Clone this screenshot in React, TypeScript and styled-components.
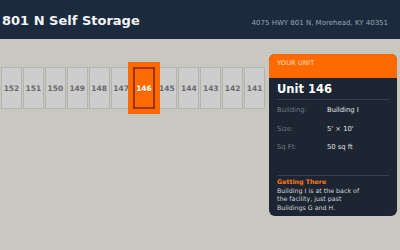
import React from "react";
import styled, { createGlobalStyle } from "styled-components";

const Global = createGlobalStyle`
  html, body { margin: 0; padding: 0; }
  body {
    width: 400px;
    height: 250px;
    overflow: hidden;
    background: #c8c8c1;
    font-family: "DejaVu Sans", Verdana, sans-serif;
  }
`;

const Page = styled.div`
  width: 400px;
  height: 250px;
  display: flex;
  flex-direction: column;
`;

const Header = styled.header`
  height: 39px;
  background: #1b2a3c;
  display: flex;
  align-items: center;
  justify-content: space-between;
  padding: 2px 12px 0 2px;
  box-sizing: border-box;
`;

const Title = styled.h1`
  margin: 0;
  font-size: 13px;
  font-weight: bold;
  color: #f2f4f7;
`;

const Address = styled.div`
  font-size: 7px;
  color: #9aa6b4;
  margin-top: 4px;
`;

const Main = styled.main`
  display: flex;
  align-items: flex-start;
  padding: 15px 3px 0 1px;
  gap: 4px;
`;

const Strip = styled.div`
  display: flex;
  gap: 1px;
  width: 264px;
  margin-top: 13px;
`;

const Unit = styled.div<{ $selected?: boolean }>`
  flex: 1;
  height: 42px;
  box-sizing: border-box;
  display: flex;
  align-items: center;
  justify-content: center;
  font-size: 7.5px;
  font-weight: bold;
  position: relative;
  background: ${(p) => (p.$selected ? "#ff6a00" : "#cdcdcd")};
  border: ${(p) => (p.$selected ? "2px solid #9b3400" : "1px solid #b2b2ae")};
  color: ${(p) => (p.$selected ? "#ffffff" : "#6a6a6a")};
  box-shadow: ${(p) => (p.$selected ? "0 0 0 5px #ff6a00" : "none")};
  z-index: ${(p) => (p.$selected ? 2 : 1)};
`;

const Panel = styled.aside`
  width: 128px;
  background: #1c2531;
  border-radius: 6px;
  overflow: hidden;
  height: 162px;
`;

const PanelHead = styled.div`
  background: #ff6a00;
  height: 24px;
  box-sizing: border-box;
  padding: 5px 8px;
  font-size: 6.5px;
  color: #ffe0c8;
  letter-spacing: 0.2px;
`;

const PanelBody = styled.div`
  padding: 4px 8px 0 8px;
`;

const UnitName = styled.div`
  font-size: 11.5px;
  font-weight: bold;
  color: #ffffff;
  padding-bottom: 3px;
  border-bottom: 1px solid #34424f;
`;

const Rows = styled.div`
  display: flex;
  flex-direction: column;
  gap: 4.5px;
  padding: 3px 0 0;
`;

const Row = styled.div`
  display: grid;
  grid-template-columns: 50px 1fr;
  height: 14px;
  align-items: center;
  font-size: 6.8px;
`;

const Label = styled.span`
  color: #6d7a88;
`;

const Value = styled.span`
  color: #e2e6ea;
`;

const Directions = styled.div`
  margin-top: 21px;
  border-top: 1px solid #34424f;
  padding-top: 2px;
  font-size: 6.3px;
  line-height: 8.7px;
  color: #d0d5db;
`;

const DirTitle = styled.div`
  color: #ff7a1a;
  font-weight: bold;
`;

const units = [152, 151, 150, 149, 148, 147, 146, 145, 144, 143, 142, 141];

export default function App() {
  return (
    <Page>
      <Global />
      <Header>
        <Title>801 N Self Storage</Title>
        <Address>4075 HWY 801 N, Morehead, KY 40351</Address>
      </Header>
      <Main>
        <Strip>
          {units.map((u) => (
            <Unit key={u} $selected={u === 146}>
              {u}
            </Unit>
          ))}
        </Strip>
        <Panel>
          <PanelHead>YOUR UNIT</PanelHead>
          <PanelBody>
            <UnitName>Unit 146</UnitName>
            <Rows>
              <Row>
                <Label>Building:</Label>
                <Value>Building I</Value>
              </Row>
              <Row>
                <Label>Size:</Label>
                <Value>5' × 10'</Value>
              </Row>
              <Row>
                <Label>Sq Ft:</Label>
                <Value>50 sq ft</Value>
              </Row>
            </Rows>
            <Directions>
              <DirTitle>Getting There</DirTitle>
              Building I is at the back of
              <br />
              the facility, just past
              <br />
              Buildings G and H.
            </Directions>
          </PanelBody>
        </Panel>
      </Main>
    </Page>
  );
}
